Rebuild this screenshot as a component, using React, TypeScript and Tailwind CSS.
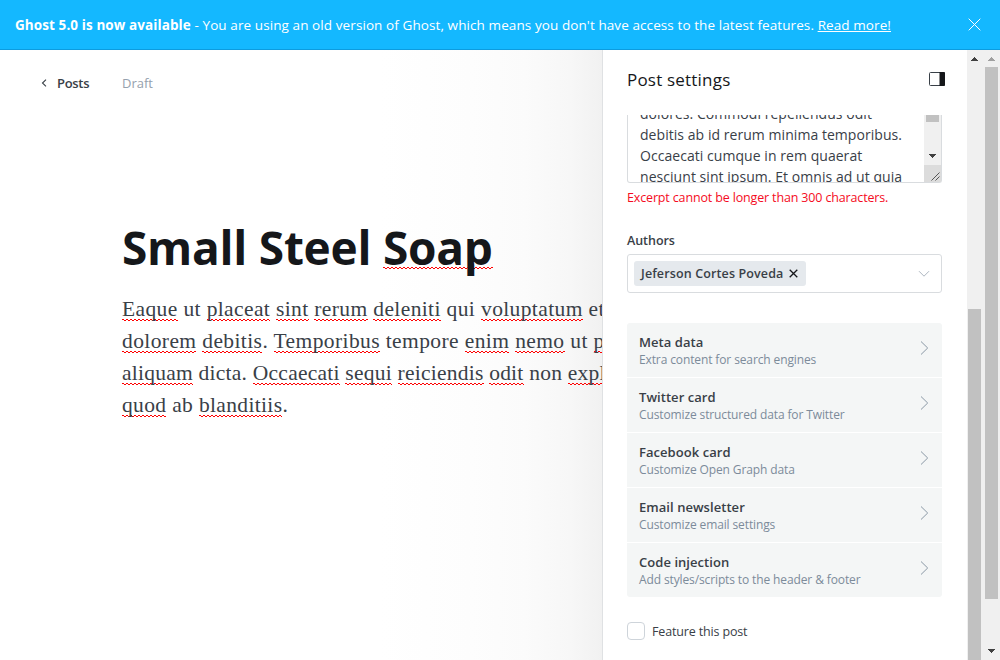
import React from "react";

function Misspelt({ children, className = "" }: { children: React.ReactNode; className?: string }) {
  return (
    <span
      className={
        "bg-[linear-gradient(90deg,#f00_50%,transparent_50%),linear-gradient(90deg,transparent_50%,#f00_50%)] bg-[length:4px_1px,4px_1px] bg-repeat-x " +
        (className || "bg-[position:0_calc(100%-1px),0_100%]")
      }
    >
      {children}
    </span>
  );
}

const lines = [
  { text: "_Eaque ut _placeat _sint _rerum _deleniti qui _voluptatum et", spacing: "tracking-[0.38px]" },
  { text: "_dolorem _debitis . _Temporibus tempore _enim _nemo ut _p", spacing: "tracking-[0.4px]" },
  { text: "_aliquam dicta. _Occaecati _sequi _reiciendis _odit non _expl", spacing: "tracking-[0.24px]" },
  { text: "_quod ab _blanditiis .", spacing: "tracking-[0.35px]" },
];

function BodyLine({ text, spacing }: { text: string; spacing: string }) {
  return (
    <div className={"h-8 whitespace-nowrap " + spacing}>
      {text.split(" ").map((w, i) => (
        <React.Fragment key={i}>
          {i > 0 && w !== "." ? " " : ""}
          {w.startsWith("_") ? <Misspelt>{w.slice(1)}</Misspelt> : w}
        </React.Fragment>
      ))}
    </div>
  );
}

const cards = [
  { title: "Meta data", sub: "Extra content for search engines" },
  { title: "Twitter card", sub: "Customize structured data for Twitter" },
  { title: "Facebook card", sub: "Customize Open Graph data" },
  { title: "Email newsletter", sub: "Customize email settings" },
  { title: "Code injection", sub: "Add styles/scripts to the header & footer" },
];

function Arrow({ up = false, className }: { up?: boolean; className: string }) {
  return (
    <svg width="7" height="4" viewBox="0 0 7 4" className={className} shapeRendering="crispEdges">
      <path d={up ? "M3 0h1v1h1v1h1v1h1v1H0V3h1V2h1V1h1z" : "M0 0h7v1H6v1H5v1H4v1H3V3H2V2H1V1H0z"} fill="currentColor" />
    </svg>
  );
}

export default function App() {
  return (
    <div className="flex h-[660px] w-[1000px] flex-col overflow-hidden bg-white font-['Open_Sans',sans-serif] text-[#394047]">
      <header className="flex h-[50px] shrink-0 items-center justify-between border-b border-[#0d9cdf] bg-[#14b8ff] pr-[19px] pl-[15px] text-[13.5px] text-white">
        <div className="pt-[2px] tracking-[0.09px] whitespace-nowrap">
          <b>Ghost 5.0 is now available</b>
          <span> - You are using an old version of Ghost, which means you don't have access to the latest features. </span>
          <a className="underline">Read more!</a>
        </div>
        <svg width="13" height="13" viewBox="0 0 13 13" className="mb-[1px]" fill="none" stroke="#fff">
          <path d="M.7.7l11.6 11.6M12.3.7.7 12.3" />
        </svg>
      </header>

      <div className="flex min-h-0 flex-1">
        <main className="h-full w-[602px] shrink-0 overflow-hidden bg-[linear-gradient(90deg,#fff_380px,#fdfdfd_470px,#fbfbfb_525px,#f7f7f7_570px,#f1f1f1_602px)]">
          <nav className="flex h-[66px] items-center pl-[41px] text-[13px]">
            <svg width="6" height="8" viewBox="0 0 6 8" fill="none" stroke="#394047" strokeWidth="1.1">
              <path d="M5 .7 1.5 4 5 7.3" />
            </svg>
            <span className="mt-px ml-[10px] w-[65px] font-semibold tracking-[-0.3px]">Posts</span>
            <span className="mt-px text-[#95a1ad]">Draft</span>
          </nav>
          <article className="pl-[122px]">
            <h1 className="mt-[101px] h-[60px] text-[46px] leading-[60px] font-bold tracking-[-0.25px] whitespace-nowrap text-[#15171a]">
              Small Steel <Misspelt className="bg-[position:0_51px,0_52px]">Soap</Misspelt>
            </h1>
            <div className="mt-[16px] font-['Liberation_Serif',serif] text-[21.5px] leading-8 text-[#394047]">
              {lines.map((l) => (
                <BodyLine key={l.text} text={l.text} spacing={l.spacing} />
              ))}
            </div>
          </article>
        </main>

        <aside className="flex h-full w-[365px] shrink-0 flex-col border-l border-[#dfe1e3] bg-white pr-[25px] pl-[24px]">
          <div className="flex h-[65px] shrink-0 items-center justify-between pb-[7px]">
            <h2 className="pt-px text-[17px] font-medium tracking-[0.2px] text-[#15171a]">Post settings</h2>
            <svg width="16" height="14" viewBox="0 0 16 14" className="-mr-[3px]">
              <rect x=".5" y=".5" width="15" height="13" rx="1" fill="#fff" stroke="#394047" />
              <path d="M10.5 0H15a1 1 0 0 1 1 1v12a1 1 0 0 1-1 1h-4.5z" fill="#15171a" />
            </svg>
          </div>

          <div className="flex h-[68px] shrink-0 rounded-b-[3px] border border-t-0 border-[#d9dcdf]">
            <div className="h-full flex-1 overflow-hidden pl-[12px] text-[14px] leading-[21px] tracking-[0.05px] whitespace-nowrap">
              <div className="-mt-[12px]">dolores. Commodi repellendus odit</div>
              <div>debitis ab id rerum minima temporibus.</div>
              <div>Occaecati cumque in rem quaerat</div>
              <div>nesciunt sint ipsum. Et omnis ad ut quia</div>
            </div>
            <div className="flex h-full w-[17px] flex-col items-center bg-[#f0f0f0]">
              <div className="h-[7px] w-[13px] bg-[#c1c1c1]" />
              <Arrow className="mt-[32px] text-[#404040]" />
              <div className="mt-auto flex h-[17px] w-full items-end justify-end bg-[#dcdcdc]">
                <svg width="9" height="9" viewBox="0 0 9 9" stroke="#555" className="mr-px mb-px">
                  <path d="M.5 8.5l8-8M4.5 8.5l4-4" />
                </svg>
              </div>
            </div>
          </div>
          <p className="mt-[4px] h-[21px] text-[12.5px] leading-[21px] tracking-[-0.15px] whitespace-nowrap text-[#f50b23]">Excerpt cannot be longer than 300 characters.</p>

          <label className="mt-[23px] h-[20px] text-[12.5px] leading-[20px] font-semibold tracking-[-0.05px]">Authors</label>
          <div className="mt-[3px] flex h-[39px] shrink-0 items-center justify-between rounded-[3px] border border-[#d9dcdf] pr-[11px] pl-[6px]">
            <div className="flex h-[25px] w-[172px] items-center gap-[5px] rounded-[3px] bg-[#e5e9ed] pl-[7px] text-[12.5px] font-semibold tracking-[0.13px] whitespace-nowrap">
              <span className="w-[143px] pt-px">Jeferson Cortes Poveda</span>
              <svg width="9" height="9" viewBox="0 0 9 9" fill="none" stroke="#15171a" strokeWidth="1.3">
                <path d="M.7.7l7.6 7.6M8.3.7.7 8.3" />
              </svg>
            </div>
            <svg width="12" height="8" viewBox="0 0 12 8" fill="none" stroke="#aeb7c1">
              <path d="M1 1.2l5 5 5-5" />
            </svg>
          </div>

          <div className="mt-[30px] flex shrink-0 flex-col gap-px overflow-hidden rounded-[3px]">
            {cards.map((c) => (
              <div key={c.title} className="flex h-[54px] items-center justify-between bg-[#f4f6f6] pr-[13px] pl-[12px] whitespace-nowrap">
                <div className="pt-px">
                  <div className="text-[13px] leading-[18px] font-semibold tracking-[0.05px]">{c.title}</div>
                  <div className="text-[12px] leading-[17px] tracking-[-0.12px] text-[#7c8b9a]">{c.sub}</div>
                </div>
                <svg width="9" height="14" viewBox="0 0 9 14" className="mb-[4px]" fill="none" stroke="#8a98a5">
                  <path d="M1 .5 7.7 7 1 13.5" />
                </svg>
              </div>
            ))}
          </div>

          <div className="mt-[25px] flex h-[18px] shrink-0 items-center gap-[7px]">
            <div className="size-[18px] rounded-[4px] border border-[#ced4da] bg-white" />
            <span className="pt-[2px] text-[12.5px] tracking-[-0.15px]">Feature this post</span>
          </div>
        </aside>

        <div className="flex w-[17px] shrink-0 flex-col items-center bg-[#f0f0f0]">
          <Arrow up className="mt-[7px] mr-[2px] text-[#404040]" />
          <div className="mt-[248px] mr-[2px] w-[13px] flex-1 bg-[#c1c1c1]" />
        </div>
        <div className="flex w-[16px] shrink-0 flex-col items-center bg-[#f0f0f0] pr-px">
          <Arrow up className="mt-[7px] text-[#a0a0a0]" />
          <div className="mt-[6px] h-[532px] w-[13px] bg-[#c1c1c1]" />
          <Arrow className="mt-[50px] text-[#404040]" />
        </div>
      </div>
    </div>
  );
}
